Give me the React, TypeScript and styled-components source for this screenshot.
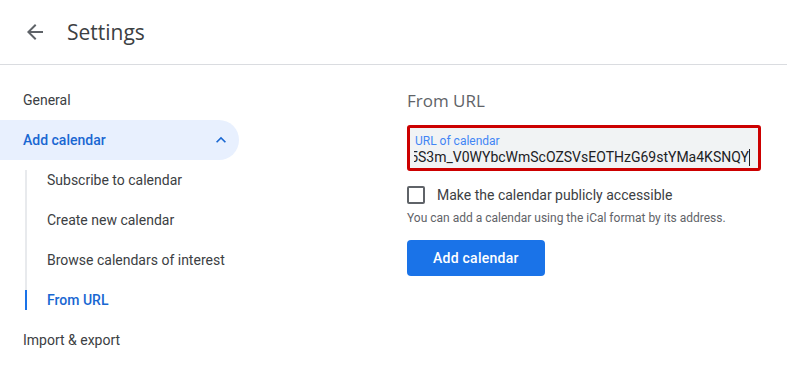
import styled, { createGlobalStyle } from "styled-components";

const GlobalStyle = createGlobalStyle`
    html, body {
        margin: 0;
        padding: 0;
        background: #fff;
        font-family: Roboto, "Liberation Sans", Arial, sans-serif;
        color: #3c4043;
    }
    * { box-sizing: border-box; }
`;

const Page = styled.div`
    width: 787px;
    height: 384px;
    overflow: hidden;
    display: flex;
    flex-direction: column;
`;

const Header = styled.header`
    height: 65px;
    flex: none;
    display: flex;
    align-items: center;
    gap: 12px;
    padding-left: 15px;
    border-bottom: 1px solid #dadce0;
`;

const IconButton = styled.button`
    width: 40px;
    height: 40px;
    border: none;
    border-radius: 50%;
    background: transparent;
    padding: 0;
    display: flex;
    align-items: center;
    justify-content: center;
    color: #5f6368;
    cursor: pointer;
`;

const Title = styled.h1`
    margin: 0;
    font-family: "Open Sans", Roboto, sans-serif;
    font-size: 21px;
    font-weight: 400;
    color: #3c4043;
    line-height: 28px;
`;

const Body = styled.div`
    flex: 1;
    display: grid;
    grid-template-columns: 256px 1fr;
`;

const Sidebar = styled.nav`
    padding-top: 15px;
    display: flex;
    flex-direction: column;
`;

const NavItem = styled.div<{ $active?: boolean }>`
    width: 239px;
    height: 40px;
    display: flex;
    align-items: center;
    justify-content: space-between;
    padding: 0 8px 0 23px;
    font-size: 14px;
    border-radius: 0 20px 20px 0;
    color: ${(p) => (p.$active ? "#1967d2" : "#3c4043")};
    font-weight: ${(p) => (p.$active ? 500 : 400)};
    background: ${(p) => (p.$active ? "#e8f0fe" : "transparent")};
`;

const SubList = styled.div`
    display: flex;
    flex-direction: column;
    margin: 10px 0 10px 25px;
    border-left: 2px solid #e8eaed;
`;

const SubItem = styled.div<{ $active?: boolean }>`
    height: 40px;
    display: flex;
    align-items: center;
    font-size: 14px;
    color: ${(p) => (p.$active ? "#1967d2" : "#3c4043")};
    font-weight: ${(p) => (p.$active ? 500 : 400)};
    &:first-child { margin-top: -10px; }
    &:last-child { margin-bottom: -10px; }
`;

const Marker = styled.span<{ $active?: boolean }>`
    width: 2px;
    height: 20px;
    margin-left: -2px;
    background: ${(p) => (p.$active ? "#1a73e8" : "transparent")};
`;

const SubLabel = styled.span`
    padding-left: 20px;
`;

const Main = styled.main`
    padding: 24px 26px 0 151px;
    display: flex;
    flex-direction: column;
    align-items: flex-start;
`;

const SectionTitle = styled.h2`
    margin: 0 0 12px;
    font-family: "Open Sans", Roboto, sans-serif;
    font-size: 17px;
    font-weight: 400;
    line-height: 24px;
    color: #5f6368;
`;

const Field = styled.div`
    width: 354px;
    height: 46px;
    background: #f1f3f4;
    border: 3px solid #cc0000;
    border-radius: 3px;
    padding: 5px 8px 0 5px;
    display: flex;
    flex-direction: column;
`;

const FieldLabel = styled.span`
    font-size: 12px;
    line-height: 16px;
    color: #4285f4;
`;

const FieldValue = styled.div`
    display: flex;
    justify-content: flex-end;
    overflow: hidden;
    white-space: nowrap;
    font-size: 14px;
    line-height: 20px;
    color: #202124;
    margin: -2px 0 0 -1px;
`;

const Caret = styled.span`
    width: 1px;
    height: 17px;
    margin-top: 2px;
    background: #202124;
    flex: none;
`;

const CheckRow = styled.label`
    display: flex;
    align-items: center;
    gap: 12px;
    margin-top: 12px;
    height: 24px;
    font-size: 14px;
    color: #3c4043;
`;

const Box = styled.span`
    width: 18px;
    height: 18px;
    border: 2px solid #5f6368;
    border-radius: 2px;
`;

const Hint = styled.p`
    margin: 3px 0 0;
    font-size: 12px;
    line-height: 16px;
    color: #5f6368;
`;

const PrimaryButton = styled.button`
    margin-top: 14px;
    height: 36px;
    padding: 0 26px;
    border: none;
    border-radius: 4px;
    background: #1a73e8;
    color: #fff;
    font-family: Roboto, sans-serif;
    font-size: 14px;
    font-weight: 500;
    letter-spacing: 0.25px;
    cursor: pointer;
`;

const subItems = [
    "Subscribe to calendar",
    "Create new calendar",
    "Browse calendars of interest",
    "From URL",
];

export default function App() {
    return (
        <Page>
            <GlobalStyle />
            <Header>
                <IconButton aria-label="Back">
                    <svg width="24" height="24" viewBox="0 0 24 24" fill="currentColor">
                        <path d="M20 11H7.83l5.59-5.59L12 4l-8 8 8 8 1.41-1.41L7.83 13H20v-2z" />
                    </svg>
                </IconButton>
                <Title>Settings</Title>
            </Header>
            <Body>
                <Sidebar>
                    <NavItem>General</NavItem>
                    <NavItem $active>
                        Add calendar
                        <svg width="20" height="20" viewBox="0 0 24 24" fill="currentColor">
                            <path d="M12 8l-6 6 1.41 1.41L12 10.83l4.59 4.58L18 14z" />
                        </svg>
                    </NavItem>
                    <SubList>
                        {subItems.map((item) => (
                            <SubItem key={item} $active={item === "From URL"}>
                                <Marker $active={item === "From URL"} />
                                <SubLabel>{item}</SubLabel>
                            </SubItem>
                        ))}
                    </SubList>
                    <NavItem>Import &amp; export</NavItem>
                </Sidebar>
                <Main>
                    <SectionTitle>From URL</SectionTitle>
                    <Field>
                        <FieldLabel>URL of calendar</FieldLabel>
                        <FieldValue>
                            5S3m_V0WYbcWmScOZSVsEOTHzG69stYMa4KSNQY
                            <Caret />
                        </FieldValue>
                    </Field>
                    <CheckRow>
                        <Box />
                        Make the calendar publicly accessible
                    </CheckRow>
                    <Hint>You can add a calendar using the iCal format by its address.</Hint>
                    <PrimaryButton>Add calendar</PrimaryButton>
                </Main>
            </Body>
        </Page>
    );
}
